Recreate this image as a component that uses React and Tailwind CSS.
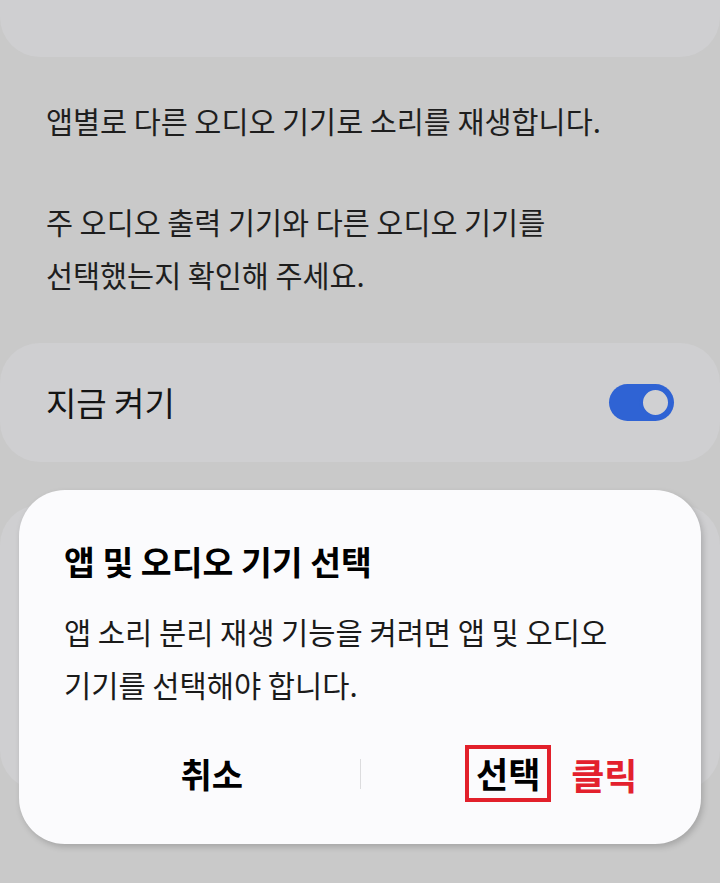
const font = { fontFamily: '"Noto Sans CJK KR", "Noto Sans", sans-serif' }

function Toggle({ on = true }) {
  return (
    <div className={`flex h-[37px] w-[65px] items-center rounded-full px-[2px] ${on ? 'justify-end bg-[#2f63d4]' : 'bg-[#9a9a9a]'}`}>
      <div className="h-[33px] w-[33px] rounded-full border-[4px] border-[#2f63d4] bg-[#d0d0d2]" />
    </div>
  )
}

function SelectDialog() {
  return (
    <div className="absolute left-[19px] top-[490px] w-[682px] rounded-[46px] bg-[#fbfbfd] px-[45px] pb-[42px] pt-[51px] shadow-[2px_3px_6px_rgba(0,0,0,0.18)]">
      <h2 className="text-[33.5px] font-bold leading-[40px] text-black">앱 및 오디오 기기 선택</h2>
      <p className="mt-[24px] text-[29.6px] leading-[53px] text-[#1a1a1a]">
        앱 소리 분리 재생 기능을 켜려면 앱 및 오디오
        <br />
        기기를 선택해야 합니다.
      </p>
      <div className="mt-[34px] flex h-[57px] items-center">
        <button type="button" className="flex-1 text-center text-[34px] font-bold text-black">
          취소
        </button>
        <div className="h-[30px] w-px bg-[#dcdcde]" />
        <div className="flex flex-1 justify-center">
          <div className="relative">
            <button
              type="button"
              className="flex h-[57px] w-[86px] items-center justify-center border-[4px] border-[#e2202b] text-[35px] font-bold text-black"
            >
              선택
            </button>
            <span className="absolute left-full top-1/2 ml-[20px] -translate-y-1/2 whitespace-nowrap text-[36px] font-bold text-[#e3212d]">
              클릭
            </span>
          </div>
        </div>
      </div>
    </div>
  )
}

export default function App() {
  return (
    <div className="relative h-[883px] w-[720px] overflow-hidden bg-[#c9c9c9]" style={font}>
      {/* card scrolled off above */}
      <div className="h-[57px] rounded-b-[40px] bg-[#cfcfd1]" />

      <div className="px-[46px] pt-[37px] text-[29.4px] leading-[53px] text-[#1e1e1e]">
        <p>앱별로 다른 오디오 기기로 소리를 재생합니다.</p>
        <p className="mt-[48px]">
          주 오디오 출력 기기와 다른 오디오 기기를
          <br />
          선택했는지 확인해 주세요.
        </p>
      </div>

      <div className="mt-[42px] flex h-[119px] items-center justify-between rounded-[40px] bg-[#cfcfd1] pl-[46px] pr-[46px]">
        <span className="text-[33px] text-[#141414]">지금 켜기</span>
        <Toggle />
      </div>

      {/* app list card under the dialog */}
      <div className="mt-[43px] h-[285px] rounded-[40px] bg-[#cfcfd1]" />

      <SelectDialog />
    </div>
  )
}
